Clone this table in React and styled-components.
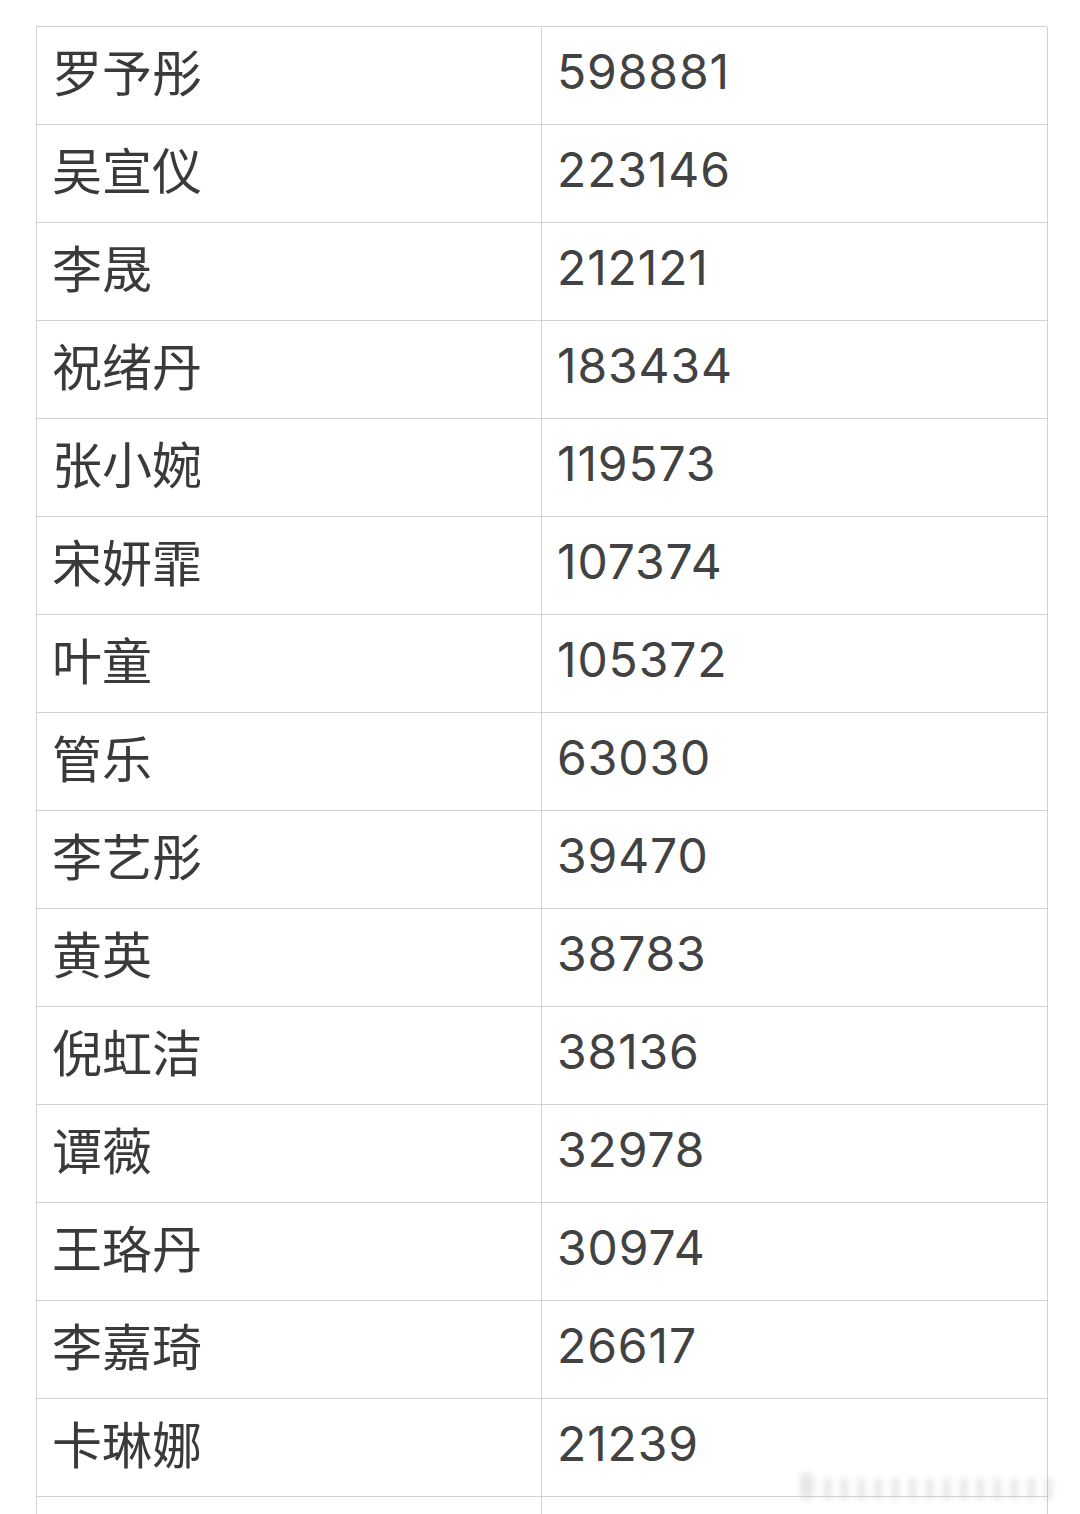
import React from "react";
import styled, { createGlobalStyle } from "styled-components";

const GlobalStyle = createGlobalStyle`
	html, body {
		margin: 0;
		padding: 0;
		background: #fff;
		overflow: hidden;
	}
	body {
		font-family: "Inter", "Noto Sans CJK SC", sans-serif;
	}
`;

const Page = styled.div`
	position: relative;
	width: 1080px;
	height: 1514px;
	overflow: hidden;
	padding: 26px 33px 0 36px;
	box-sizing: border-box;
`;

const Table = styled.div`
	display: grid;
	grid-template-columns: 505px 506px;
	border-top: 1.5px solid #d2d2d2;
	border-left: 1.5px solid #d2d2d2;
`;

const Cell = styled.div`
	height: 98px;
	box-sizing: border-box;
	display: flex;
	align-items: center;
	padding-left: 15px;
	padding-bottom: ${p => p.num ? "8px" : "12px"};
	border-right: 1.5px solid #d2d2d2;
	border-bottom: 1.5px solid #d2d2d2;
	color: ${p => p.num ? "#424242" : "#3a3a3a"};
	font-family: ${p => p.num ? `"Inter", "Liberation Sans", sans-serif` : `"Noto Sans CJK SC", sans-serif`};
	font-size: ${p => p.num ? "48px" : "50px"};
	font-weight: 400;
	font-variant-numeric: proportional-nums;
	letter-spacing: ${p => p.num ? "0.9px" : "0"};
`;

const Watermark = styled.div`
	position: absolute;
	right: 28px;
	bottom: 14px;
	display: flex;
	align-items: flex-end;
	gap: 10px;
	filter: blur(3px);
	opacity: 0.3;
	span {
		display: block;
		width: 7px;
		height: 22px;
		background: #b0b0b0;
		border-radius: 2px;
	}
	span:first-child {
		width: 14px;
		height: 28px;
		border-radius: 7px;
	}
`;

const rows = [
	["罗予彤", "598881"],
	["吴宣仪", "223146"],
	["李晟", "212121"],
	["祝绪丹", "183434"],
	["张小婉", "119573"],
	["宋妍霏", "107374"],
	["叶童", "105372"],
	["管乐", "63030"],
	["李艺彤", "39470"],
	["黄英", "38783"],
	["倪虹洁", "38136"],
	["谭薇", "32978"],
	["王珞丹", "30974"],
	["李嘉琦", "26617"],
	["卡琳娜", "21239"],
	["", ""],
];

export default function App() {
	return (
		<Page>
			<GlobalStyle />
			<Table>
				{rows.map(([name, score], i) => (
					<React.Fragment key={i}>
						<Cell>{name}</Cell>
						<Cell num>{score}</Cell>
					</React.Fragment>
				))}
			</Table>
			<Watermark>
				{Array.from({ length: 15 }).map((_, i) => <span key={i} />)}
			</Watermark>
		</Page>
	);
}
